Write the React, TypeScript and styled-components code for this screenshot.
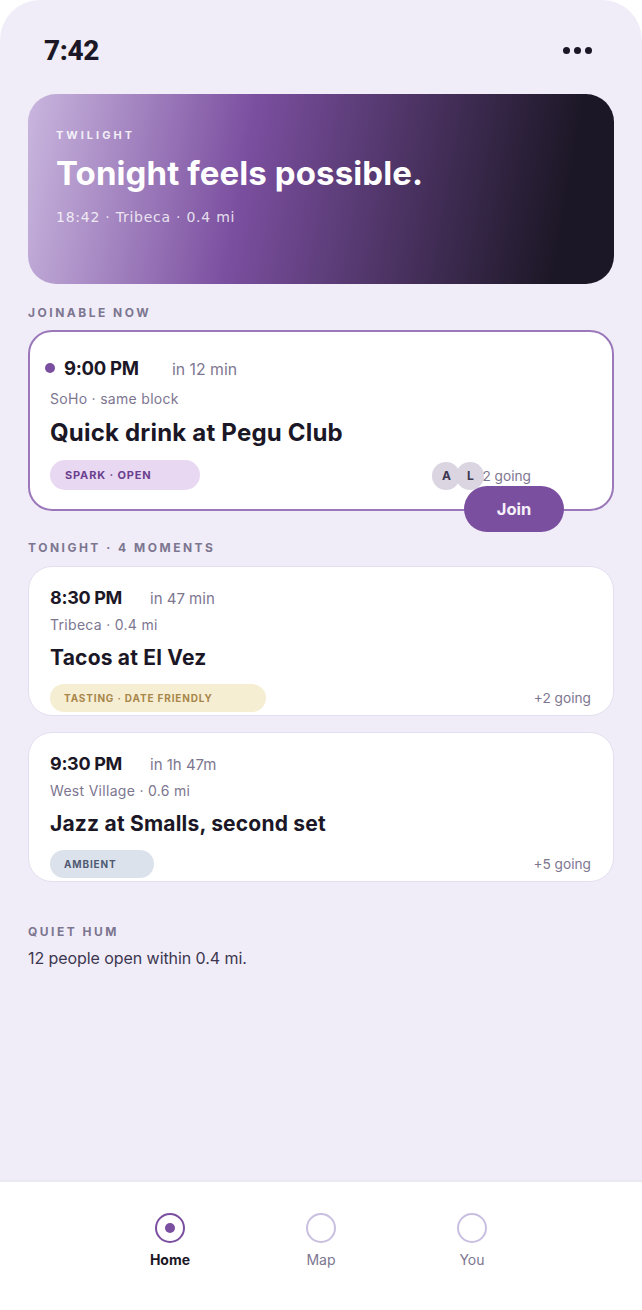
import React from 'react';
import styled, { createGlobalStyle } from 'styled-components';

const Global = createGlobalStyle`
  html, body { margin: 0; padding: 0; background: #fff; }
  * { box-sizing: border-box; }
`;

const font = `Inter, "Liberation Sans", sans-serif`;

const Phone = styled.div`
  width: 642px;
  height: 1310px;
  background: #f0edf8;
  border-radius: 40px 40px 0 0;
  display: flex;
  flex-direction: column;
  font-family: ${font};
  color: #1c1726;
  overflow: hidden;
`;
const Status = styled.div`
  height: 94px;
  padding: 32px 50px 0 44px;
  display: flex;
  justify-content: space-between;
  align-items: flex-start;
`;
const Clock = styled.div`
  font-family: Roboto, sans-serif;
  font-weight: 800;
  font-size: 28px;
  line-height: 38px;
  letter-spacing: -0.4px;
`;
const Dots = styled.div`
  display: flex;
  gap: 4px;
  margin-top: 15px;
`;
const Dot = styled.span`
  width: 7px;
  height: 7px;
  border-radius: 50%;
  background: #1c1726;
`;
const Main = styled.main`
  flex: 1;
  padding: 0 28px;
  display: flex;
  flex-direction: column;
`;
const Hero = styled.section`
  height: 190px;
  border-radius: 28px;
  padding: 33px 28px 0;
  color: #fff;
  background: linear-gradient(100deg, #c9b6de 0%, #7b4fa0 37%, #1c1726 90%);
`;
const Eyebrow = styled.div`
  font-size: 11px;
  line-height: 17px;
  font-weight: 700;
  letter-spacing: 3px;
  opacity: 0.85;
`;
const HeroTitle = styled.h1`
  margin: 9px 0 0;
  font-size: 33px;
  line-height: 40px;
  font-weight: 700;
  letter-spacing: 0.1px;
`;
const HeroSub = styled.div`
  margin-top: 14px;
  font-family: "DejaVu Sans", sans-serif;
  font-size: 14px;
  line-height: 21px;
  letter-spacing: 0.75px;
  opacity: 0.8;
`;
const SectionLabel = styled.div<{ $top: number; $bottom: number }>`
  margin: ${(p) => p.$top}px 0 ${(p) => p.$bottom}px;
  font-size: 12px;
  line-height: 18px;
  font-weight: 700;
  letter-spacing: 2.5px;
  color: #7d7690;
`;
const Card = styled.article<{ $live?: boolean; $h: number }>`
  position: relative;
  height: ${(p) => p.$h}px;
  margin-bottom: 16px;
  border-radius: 24px;
  background: #fff;
  border: ${(p) => (p.$live ? '2px solid #9a78ba' : '1px solid #e4dff0')};
  padding: ${(p) => (p.$live ? '20px 20px 0' : '14px 22px 0 21px')};
`;
const TimeRow = styled.div`
  display: flex;
  align-items: center;
  height: 32px;
`;
const LiveDot = styled.span`
  width: 10px;
  height: 10px;
  margin: 0 9px 0 -5px;
  border-radius: 50%;
  background: #7b4fa0;
`;
const Time = styled.span<{ $w: number; $live?: boolean }>`
  width: ${(p) => p.$w}px;
  font-size: ${(p) => (p.$live ? 18.5 : 18)}px;
  font-weight: 700;
  letter-spacing: -0.3px;
`;
const Until = styled.span<{ $live?: boolean }>`
  font-size: ${(p) => (p.$live ? 15.8 : 15)}px;
  color: #7d7690;
  padding-top: 2px;
`;
const Place = styled.div<{ $live?: boolean }>`
  margin-top: ${(p) => (p.$live ? 4 : 1)}px;
  font-size: 14px;
  line-height: 21px;
  letter-spacing: 0.3px;
  color: #7d7690;
`;
const Title = styled.h2<{ $live?: boolean }>`
  margin: 6px 0 0;
  font-size: ${(p) => (p.$live ? 24 : 21)}px;
  line-height: ${(p) => (p.$live ? 36 : 34)}px;
  font-weight: 700;
  letter-spacing: 0.2px;
`;
const Foot = styled.div<{ $live?: boolean; $top: number }>`
  display: flex;
  justify-content: space-between;
  align-items: center;
  margin-top: ${(p) => p.$top}px;
  padding-right: ${(p) => (p.$live ? 61 : 0)}px;
`;
const Pill = styled.span<{ $w: number; $h: number; $bg: string; $fg: string; $pad: number; $size: number }>`
  display: flex;
  align-items: center;
  width: ${(p) => p.$w}px;
  height: ${(p) => p.$h}px;
  padding-left: ${(p) => p.$pad}px;
  border-radius: ${(p) => p.$h / 2}px;
  background: ${(p) => p.$bg};
  color: ${(p) => p.$fg};
  font-size: ${(p) => p.$size}px;
  font-weight: 700;
  letter-spacing: 0.85px;
  white-space: nowrap;
`;
const Going = styled.span`
  font-size: 13.7px;
  color: #7d7690;
`;
const People = styled.div`
  display: flex;
  align-items: center;
  margin-top: 1px;
  ${Going} { margin-left: -2px; }
`;
const Avatar = styled.span`
  width: 28px;
  height: 28px;
  border-radius: 50%;
  background: #dad5e0;
  color: #3d3750;
  font-size: 12px;
  font-weight: 700;
  display: flex;
  align-items: center;
  justify-content: center;
  & + & { margin-left: -4px; }
`;
const JoinButton = styled.button`
  position: absolute;
  right: 48px;
  bottom: -23px;
  width: 100px;
  height: 46px;
  border: 0;
  border-radius: 23px;
  background: #7b4fa0;
  color: #f6f0fa;
  font-family: ${font};
  font-size: 16.5px;
  font-weight: 700;
`;
const Hum = styled.div`
  margin-top: 25px;
  font-size: 12px;
  line-height: 18px;
  font-weight: 700;
  letter-spacing: 2.5px;
  color: #7d7690;
`;
const HumText = styled.p`
  margin: 5px 0 0;
  font-size: 16px;
  line-height: 24px;
  letter-spacing: -0.07px;
  color: #3d3750;
`;
const Nav = styled.nav`
  height: 130px;
  background: #fff;
  border-top: 2px solid #ebe8f3;
  display: flex;
  justify-content: center;
  padding-top: 31px;
`;
const NavItem = styled.div<{ $active?: boolean }>`
  width: 151px;
  display: flex;
  flex-direction: column;
  align-items: center;
  font-size: 14px;
  line-height: 20px;
  gap: 7px;
  font-weight: ${(p) => (p.$active ? 700 : 400)};
  color: ${(p) => (p.$active ? '#1c1726' : '#7d7690')};
`;
const Ring = styled.span<{ $active?: boolean }>`
  width: 30px;
  height: 30px;
  border-radius: 50%;
  border: 2px solid ${(p) => (p.$active ? '#7b4fa0' : '#c9bfe0')};
  display: flex;
  align-items: center;
  justify-content: center;
`;
const RingCore = styled.span`
  width: 10px;
  height: 10px;
  border-radius: 50%;
  background: #7b4fa0;
`;

export default function App() {
  return (
    <>
      <Global />
      <Phone>
        <Status>
          <Clock>7:42</Clock>
          <Dots><Dot /><Dot /><Dot /></Dots>
        </Status>
        <Main>
          <Hero>
            <Eyebrow>TWILIGHT</Eyebrow>
            <HeroTitle>Tonight feels possible.</HeroTitle>
            <HeroSub>18:42 · Tribeca · 0.4 mi</HeroSub>
          </Hero>
          <SectionLabel $top={20} $bottom={8}>JOINABLE NOW</SectionLabel>
          <Card $live $h={181}>
            <TimeRow>
              <LiveDot />
              <Time $live $w={108}>9:00 PM</Time>
              <Until $live>in 12 min</Until>
            </TimeRow>
            <Place $live>SoHo · same block</Place>
            <Title $live>Quick drink at Pegu Club</Title>
            <Foot $live $top={9}>
              <Pill $w={150} $h={30} $pad={15} $size={11} $bg="#e9d8f2" $fg="#6b3f8f">SPARK · OPEN</Pill>
              <People>
                <Avatar>A</Avatar>
                <Avatar>L</Avatar>
                <Going>2 going</Going>
              </People>
            </Foot>
            <JoinButton>Join</JoinButton>
          </Card>
          <SectionLabel $top={12} $bottom={9}>TONIGHT · 4 MOMENTS</SectionLabel>
          <Card $h={150}>
            <TimeRow>
              <Time $w={100}>8:30 PM</Time>
              <Until>in 47 min</Until>
            </TimeRow>
            <Place>Tribeca · 0.4 mi</Place>
            <Title>Tacos at El Vez</Title>
            <Foot $top={9}>
              <Pill $w={216} $h={28} $pad={14} $size={10} $bg="#f6eed3" $fg="#a8864a">TASTING · DATE FRIENDLY</Pill>
              <Going>+2 going</Going>
            </Foot>
          </Card>
          <Card $h={150}>
            <TimeRow>
              <Time $w={100}>9:30 PM</Time>
              <Until>in 1h 47m</Until>
            </TimeRow>
            <Place>West Village · 0.6 mi</Place>
            <Title>Jazz at Smalls, second set</Title>
            <Foot $top={9}>
              <Pill $w={104} $h={28} $pad={14} $size={10} $bg="#dce2ec" $fg="#4f5a72">AMBIENT</Pill>
              <Going>+5 going</Going>
            </Foot>
          </Card>
          <Hum>QUIET HUM</Hum>
          <HumText>12 people open within 0.4 mi.</HumText>
        </Main>
        <Nav>
          <NavItem $active><Ring $active><RingCore /></Ring>Home</NavItem>
          <NavItem><Ring />Map</NavItem>
          <NavItem><Ring />You</NavItem>
        </Nav>
      </Phone>
    </>
  );
}
